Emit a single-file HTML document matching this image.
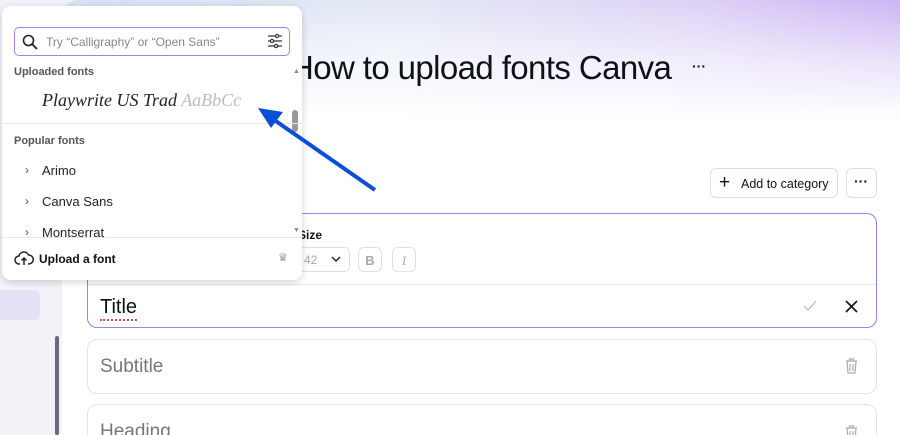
<!DOCTYPE html>
<html><head><style>
*{box-sizing:border-box;margin:0;padding:0}
html,body{width:900px;height:435px;overflow:hidden}
body{font-family:"Liberation Sans",sans-serif;background:#f2f2f8;position:relative;color:#0d1216}
.main{position:absolute;left:62px;top:0;width:838px;height:435px;background:#fff;border-radius:16px 0 0 0;overflow:hidden}
.grad{position:absolute;left:0;top:0;width:838px;height:120px;background:linear-gradient(100deg,#d3e2f3 0%,#e4e8f6 40%,#dcd0f6 75%,#c9b3f3 100%)}
.grad:after{content:"";position:absolute;left:0;top:0;right:0;bottom:0;background:linear-gradient(180deg,rgba(255,255,255,0) 0%,rgba(255,255,255,.6) 50%,#fff 100%)}
.card{position:absolute;left:25px;width:790px;border:1px solid #e3e4e8;border-radius:10px;background:#fff}
.abs{position:absolute}
.btn{position:absolute;border:1px solid #dcdde1;border-radius:6px;background:#fff}
.panel{position:absolute;left:2px;top:6px;width:300px;height:274px;background:#fff;border-radius:9px;box-shadow:0 2px 8px rgba(0,0,0,.18)}
.lbl{font-size:11px;font-weight:bold;color:#555}
.item{position:absolute;left:40px;font-size:13px;color:#222}
.chev{position:absolute;left:23px;font-size:12px;color:#555}
</style></head><body>
<div class="abs" style="left:0;top:290px;width:40px;height:30px;background:#e4e1f7;border-radius:0 6px 6px 0"></div>
<div class="abs" style="left:55px;top:336px;width:4px;height:99px;background:#6b6b78;border-radius:2px"></div>
<div class="main">
 <div class="grad"></div>
 <div class="abs" style="left:228px;top:49px;font-size:33px;letter-spacing:-0.6px">How to upload fonts Canva</div>
 <div class="abs" style="left:630px;top:58px;font-size:14px;font-weight:bold">···</div>
 <div class="btn" style="left:648px;top:168px;width:128px;height:30px"><span class="abs" style="left:8px;top:3px;font-size:19px">+</span><span class="abs" style="left:30px;top:8px;font-size:12.5px">Add to category</span></div>
 <div class="btn" style="left:784px;top:168px;width:31px;height:30px"><span class="abs" style="left:7px;top:4px;font-size:14px;font-weight:bold">···</span></div>
 <div class="card" style="top:213px;height:115px;border-color:#9b82ec">
  <div class="abs" style="left:210px;top:14px;font-size:12px;font-weight:bold">Size</div>
  <div class="abs" style="left:200px;top:33px;width:62px;height:25px;border:1px solid #e0e0e4;border-radius:5px;font-size:12px;color:#aaa;padding:5px 0 0 15px">42<svg style="position:absolute;right:8px;top:8px" width="10" height="7" viewBox="0 0 10 7"><path d="M1 1l4 4 4-4" fill="none" stroke="#222" stroke-width="1.5"/></svg></div>
  <div class="abs" style="left:270px;top:33px;width:24px;height:25px;border:1px solid #e0e0e4;border-radius:6px;font-weight:bold;color:#aaa;text-align:center;padding-top:5px;font-size:13px">B</div>
  <div class="abs" style="left:304px;top:33px;width:24px;height:25px;border:1px solid #e0e0e4;border-radius:6px;font-style:italic;color:#aaa;text-align:center;padding-top:5px;font-size:13px;font-family:'Liberation Serif',serif">I</div>
  <div class="abs" style="left:0;top:70px;width:788px;height:1px;background:#e8e8ec"></div>
  <div class="abs" style="left:12px;top:82px;font-size:20px;border-bottom:2px dotted #d45">Title</div>
  <svg class="abs" style="left:715px;top:86px" width="14" height="12" viewBox="0 0 14 12"><path d="M1 6l4 4 8-9" fill="none" stroke="#bbb" stroke-width="1.3"/></svg>
  <svg class="abs" style="left:757px;top:86px" width="13" height="13" viewBox="0 0 13 13"><path d="M1 1l11 11M12 1L1 12" stroke="#111" stroke-width="1.6"/></svg>
 </div>
 <div class="card" style="top:339px;height:55px"><div class="abs" style="left:12px;top:16px;font-size:19px;color:#777">Subtitle</div>
 <svg class="abs" style="left:757px;top:18px" width="13" height="16" viewBox="0 0 13 16" fill="none" stroke="#aaa" stroke-width="1.2"><path d="M1 3h11M4.5 3V1h4v2M2 3l1 12h7l1-12M5 6v7M8 6v7"/></svg></div>
 <div class="card" style="top:404px;height:60px"><div class="abs" style="left:12px;top:16px;font-size:19px;color:#777">Heading</div>
 <svg class="abs" style="left:757px;top:20px" width="13" height="16" viewBox="0 0 13 16" fill="none" stroke="#aaa" stroke-width="1.2"><path d="M1 3h11M4.5 3V1h4v2M2 3l1 12h7l1-12M5 6v7M8 6v7"/></svg></div>
</div>
<div class="panel">
 <div class="abs" style="left:12px;top:21px;width:276px;height:29px;border:1.5px solid #9b82ec;border-radius:5px">
  <svg class="abs" style="left:7px;top:6px" width="16" height="16" viewBox="0 0 16 16"><circle cx="6.5" cy="6.5" r="5" fill="none" stroke="#222" stroke-width="1.6"/><path d="M10 10l5 5" stroke="#222" stroke-width="1.8"/></svg>
  <span class="abs" style="left:31px;top:7px;font-size:12px;color:#888">Try “Calligraphy” or “Open Sans”</span>
  <svg class="abs" style="left:252px;top:5px" width="16" height="16" viewBox="0 0 16 16" fill="none" stroke="#333" stroke-width="1.2"><path d="M1 3h14M1 8h14M1 13h14"/><circle cx="10" cy="3" r="1.6" fill="#fff"/><circle cx="5" cy="8" r="1.6" fill="#fff"/><circle cx="9" cy="13" r="1.6" fill="#fff"/></svg>
 </div>
 <div class="abs lbl" style="left:12px;top:60px">Uploaded fonts</div>
 <div class="abs" style="left:291px;top:62px;font-size:7px;color:#888">▲</div>
 <div class="abs" style="left:40px;top:84px;font-size:18px;font-style:italic;font-family:'Liberation Serif',serif;color:#222">Playwrite US Trad <span style="color:#bbb">AaBbCc</span></div>
 <div class="abs" style="left:290px;top:104px;width:6px;height:22px;background:#999;border-radius:3px"></div>
 <div class="abs" style="left:0;top:117px;width:300px;height:1px;background:#e8e8ec"></div>
 <div class="abs lbl" style="left:12px;top:129px">Popular fonts</div>
 <div class="chev" style="top:157px">›</div><div class="item" style="top:157px">Arimo</div>
 <div class="chev" style="top:188px">›</div><div class="item" style="top:188px">Canva Sans</div>
 <div class="chev" style="top:219px">›</div><div class="item" style="top:219px">Montserrat</div>
 <div class="abs" style="left:291px;top:221px;font-size:7px;color:#888">▼</div>
 <div class="abs" style="left:0;top:231px;width:300px;height:43px;background:#fff;border-top:1px solid #e8e8ec;border-radius:0 0 9px 9px">
  <svg class="abs" style="left:12px;top:12px" width="20" height="16" viewBox="0 0 20 16" fill="none" stroke="#222" stroke-width="1.5"><path d="M6 14H5a4 4 0 0 1 0-8 5 5 0 0 1 9.5-1A4 4 0 0 1 15 14h-1"/><path d="M10 15V8M7.5 10.5 10 8l2.5 2.5"/></svg>
  <span class="abs" style="left:37px;top:14px;font-size:12px;font-weight:bold">Upload a font</span>
  <span class="abs" style="left:276px;top:13px;font-size:11px;color:#999">♛</span>
 </div>
</div>
<svg class="abs" style="left:0;top:0" width="900" height="435"><path d="M375 190L270 117" stroke="#0b4fd8" stroke-width="4"/><path d="M258 108L283 112L271 128Z" fill="#0b4fd8"/></svg>
</body></html>
